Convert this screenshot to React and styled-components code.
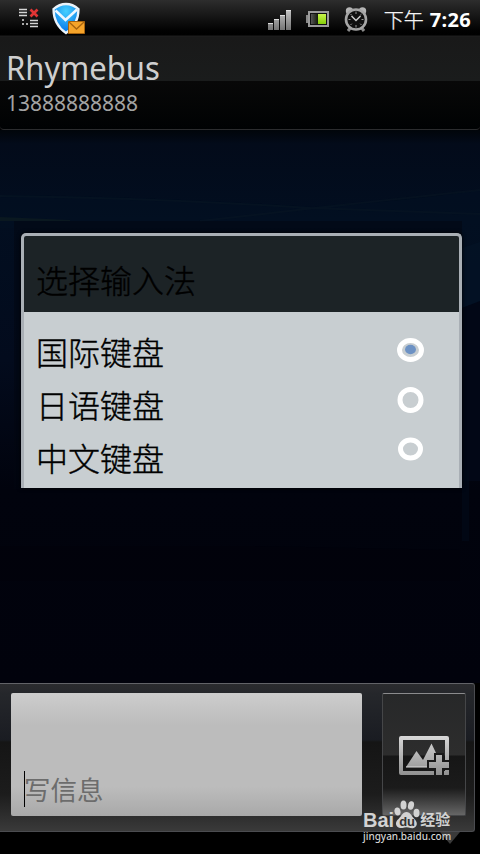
import { useState } from "react";
import styled, { createGlobalStyle } from "styled-components";

const methods = [
  { label: "国际键盘", rx: 11, ry: 9.5, gap: 5 },
  { label: "日语键盘", rx: 10.5, ry: 10.5, gap: 2 },
  { label: "中文键盘", rx: 10, ry: 9, gap: -2 },
];

const App = () => {
  const [selected, setSelected] = useState(0);

  return (
    <Screen>
      <GlobalStyle />

      <StatusBar>
        <SyncIcon />
        <ShieldIcon />
        <Spacer />
        <SignalIcon />
        <BatteryIcon />
        <AlarmIcon />
        <Period>下午</Period>
        <Clock>7:26</Clock>
      </StatusBar>

      <Header>
        <Contact>Rhymebus</Contact>
        <Phone>13888888888</Phone>
      </Header>

      <Conversation>
        <Wallpaper />
        <Dialog>
          <DialogTitle>选择输入法</DialogTitle>
          <Options>
            {methods.map((method, i) => (
              <Option key={method.label} onClick={() => setSelected(i)}>
                <span>{method.label}</span>
                <Radio {...method} checked={selected === i} />
              </Option>
            ))}
          </Options>
        </Dialog>
      </Conversation>

      <Footer>
        <Composer>
          <Message>
            <Caret />
            写信息
          </Message>
          <AttachButton>
            <PictureIcon />
          </AttachButton>
        </Composer>
        <Pointer />
        <Watermark>
          <Brand>
            <span>Bai</span>
            <Paw>
              <PawIcon />
              <PawText>du</PawText>
            </Paw>
            <BrandSuffix>经验</BrandSuffix>
          </Brand>
          <Site>jingyan.baidu.com</Site>
        </Watermark>
      </Footer>
    </Screen>
  );
};

const Radio = ({ rx, ry, gap, checked }) => (
  <RadioSvg $gap={gap} width="28" height="28" viewBox="0 0 28 28">
    <ellipse
      cx="14.5"
      cy="14"
      rx={rx}
      ry={ry}
      fill="none"
      stroke="#fff"
      strokeWidth="5"
    />
    {checked && <ellipse cx="14.5" cy="13.5" rx="5.5" ry="4.7" fill="#6d92c4" />}
  </RadioSvg>
);

const SyncIcon = () => (
  <svg width="22" height="22" viewBox="0 0 22 22">
    <path
      d="M1 2h8M1 5h8M1 8h8M12 13h8M12 16h8M12 19h8"
      transform="translate(0 -.5)"
      stroke="#d5d5d5"
      strokeWidth="1.6"
    />
    <path d="M4 11h2v2H4zM4 15h2v2H4zM8 15h2v2H8z" fill="#aaa" />
    <path d="M12.5 1.5l7 7M19.5 1.5l-7 7" stroke="#e03535" strokeWidth="2.7" />
  </svg>
);

const ShieldIcon = () => (
  <ShieldSvg width="34" height="33" viewBox="0 0 34 33">
    <defs>
      <radialGradient id="shield" cx=".5" cy=".25" r=".7">
        <stop offset="0" stopColor="#45d0ff" />
        <stop offset="1" stopColor="#0878e8" />
      </radialGradient>
    </defs>
    <path
      d="M15 2C10 2 6 4 2.5 7C2.5 16 6 25 15 31C24 25 27.5 16 27.5 7C24 4 20 2 15 2z"
      fill="url(#shield)"
      stroke="#eaf3fa"
      strokeWidth="2.3"
    />
    <path
      d="M4.5 8.5L14.5 18L26 7.5"
      fill="none"
      stroke="#eef7ff"
      strokeWidth="2.6"
    />
    <path
      d="M17.5 19.5h16v12h-16z"
      fill="#f6a42a"
      stroke="#a8640f"
      strokeWidth="1"
    />
    <path d="M18 20l7.5 7l7.5-7" fill="none" stroke="#a8640f" strokeWidth="1.3" />
  </ShieldSvg>
);

const SignalIcon = () => (
  <svg width="24" height="23" viewBox="0 -2 24 23">
    <defs>
      <linearGradient id="bars" x1="0" y1="0" x2="0" y2="20" gradientUnits="userSpaceOnUse">
        <stop offset="0" stopColor="#c4c4c4" />
        <stop offset="1" stopColor="#747474" />
      </linearGradient>
    </defs>
    <path
      d="M0 13h5v7H0zM6 9h5v11H6zM12 5h5v15h-5zM18 0h5v20h-5z"
      fill="url(#bars)"
    />
    <path d="M0 13.5h5M6 9.5h5M12 5.5h5M18 .5h5" stroke="#dedede" />
  </svg>
);

const BatteryIcon = () => (
  <BatterySvg width="23" height="17" viewBox="0 0 23 17">
    <defs>
      <linearGradient id="charge" x1="0" y1="0" x2="0" y2="1">
        <stop offset="0" stopColor="#c8f34b" />
        <stop offset="1" stopColor="#86cf09" />
      </linearGradient>
      <linearGradient id="drained">
        <stop offset="0" stopColor="#555" />
        <stop offset="1" stopColor="#141a0a" />
      </linearGradient>
    </defs>
    <path d="M3 1h19v14H3z" fill="#111" stroke="#9b9b9b" strokeWidth="2" />
    <path d="M0 4h2v8H0z" fill="#888" />
    <path d="M5 3h7v10H5z" fill="url(#drained)" />
    <path d="M12 3h8v10h-8z" fill="url(#charge)" />
  </BatterySvg>
);

const AlarmIcon = () => (
  <AlarmSvg width="24" height="25" viewBox="0 0 24 25">
    <path d="M4 24l3-4M20 24l-3-4" stroke="#8a8a8a" strokeWidth="3" />
    <circle cx="5.5" cy="4" r="3.7" fill="#b5b5b5" />
    <circle cx="18.5" cy="4" r="3.7" fill="#b5b5b5" />
    <circle cx="12" cy="12.5" r="10" fill="#101010" stroke="#a6a6a6" strokeWidth="2.6" />
    <path
      d="M12 4.5v2.5M12 18v2.5M4.5 12.5h2M17.5 12.5h2M6.5 7l1.3 1.3M17.5 7l-1.3 1.3M6.5 18l1.3-1.3M17.5 18l-1.3-1.3"
      stroke="#999"
    />
    <path d="M7.5 9l4.5 4.5l4.5-4.5" fill="none" stroke="#ccc" strokeWidth="1.5" />
  </AlarmSvg>
);

const PictureIcon = () => (
  <svg width="50" height="40" viewBox="0 0 50 40">
    <defs>
      <linearGradient id="metal" x1="0" y1="0" x2="0" y2="40" gradientUnits="userSpaceOnUse">
        <stop offset="0" stopColor="#d8d8d8" />
        <stop offset="1" stopColor="#8f8f8f" />
      </linearGradient>
    </defs>
    <path
      fillRule="evenodd"
      d="M2 0h46q2 0 2 2v36q0 1-2 1H2q-2 0-2-2V2q0-2 2-2zM4 4v31h42V4z"
      fill="url(#metal)"
    />
    <path d="M7 31L17.5 15L24 24L32.5 7.5L37 17v14z" fill="url(#metal)" />
    <path d="M7 31h23" stroke="#ddd" />
    <path d="M35 17h10v7h5v10h-5v6H35v-6h-7V24h7z" fill="#1a1a1a" />
    <path d="M37 19h6v7h7v6h-7v7h-6v-7h-7v-6h7z" fill="url(#metal)" />
    <path d="M46 34h4v4q0 1-1 1h-3z" fill="url(#metal)" />
  </svg>
);

const PawIcon = () => (
  <svg width="26" height="29" viewBox="0 0 26 29">
    <g fill="#d2d2d2">
      <ellipse cx="3.5" cy="11.5" rx="3" ry="4" transform="rotate(-12 3.5 11.5)" />
      <ellipse cx="9.5" cy="5" rx="3" ry="4.5" />
      <ellipse cx="17" cy="5.5" rx="3" ry="4.3" transform="rotate(12 17 5.5)" />
      <ellipse cx="22.5" cy="13" rx="3" ry="4.2" />
      <path d="M12.500 12c4 0 5 4 8 7c5 5 1 10-4 9c-3-1-5-1-8 0c-6 1-9-5-4-9c3-3 4-7 8-7z" />
    </g>
  </svg>
);

// faint light streaks behind the dialog
const Wallpaper = () => (
  <WallpaperSvg width="480" height="553" viewBox="0 0 480 553" preserveAspectRatio="none">
    <path d="M0 65Q130 66 315 77Q400 72 480 60V170L462 178V98H0z" fill="#031224" opacity=".4" />
    <path d="M0 66Q160 68 310 78L480 84M200 91L315 78L480 60" fill="none" stroke="#0b1b25" strokeWidth="2" opacity=".35" />
    <path d="M0 87l70 3v1H0z" fill="#0a1820" />
    <path d="M14 91h448v268H14z" fill="#02050f" opacity=".5" />
    <path d="M462 118l18-6v60l-18 6z" fill="#041326" opacity=".8" />
    <path d="M462 178l18-7v180h-18z" fill="#020716" />
    <path d="M462 340h7v71h-7z" fill="#020a18" opacity=".7" />
    <path d="M0 416h250l210 4v31H0z" fill="#01020a" opacity=".65" />
  </WallpaperSvg>
);

const GlobalStyle = createGlobalStyle`
  * {
    box-sizing: border-box;
  }

  body {
    background-color: #000;
    margin: 0;
  }
`;

const Screen = styled.div`
  background-color: #000;
  display: flex;
  flex-direction: column;
  font-family: "Noto Sans", "Noto Sans CJK SC", sans-serif;
  height: 854px;
  overflow: hidden;
  width: 480px;

  svg {
    display: block;
    flex: none;
  }
`;

const StatusBar = styled.div`
  align-items: flex-start;
  background: linear-gradient(#2d2d2d 0, #191919 14px, #010101 31px, #000 35px, #1c1c1c 36px);
  display: flex;
  height: 37px;
  padding: 8px 9px 0 18px;
`;

const ShieldSvg = styled.svg`
  margin: -6px 0 0 11px;
`;

const Spacer = styled.div`
  flex: 1;
`;

const BatterySvg = styled.svg`
  margin: 3px 0 0 14px;
`;

const AlarmSvg = styled.svg`
  margin: -1px 0 0 15px;
`;

const Period = styled.span`
  color: #f5f5f5;
  font-family: "Noto Sans CJK SC", sans-serif;
  font-size: 20px;
  font-weight: 300;
  -webkit-text-stroke: 0.3px #f5f5f5;
  line-height: 24px;
  margin-left: 16px;
`;

const Clock = styled.span`
  color: #fff;
  font-size: 20px;
  font-weight: 700;
  letter-spacing: 0.3px;
  line-height: 24px;
  margin-left: 6px;
`;

const Header = styled.div`
  background: linear-gradient(#191919 0, #1a1c1c 44px, #080808 44px, #000203 100%);
  border-bottom: 1px solid #2b2c2e;
  border-radius: 0 0 4px 4px;
  display: flex;
  flex-direction: column;
  height: 93px;
  padding: 10px 6px 0;
`;

/* slightly condensed name */
const Contact = styled.div`
  color: #cfcfcf;
  font-size: 33px;
  line-height: 41px;
  transform: scaleX(0.94);
  transform-origin: left;
`;

const Phone = styled.div`
  color: #a3a3a3;
  font-size: 21px;
  line-height: 30px;
`;

const Conversation = styled.div`
  background: linear-gradient(#01050a 0, #030b1a 14px, #020e20 90px, #030b1d 230px, #01030d 360px, #01020c 100%);
  height: 553px;
  padding: 103px 18px 0 21px;
  position: relative;
`;

const WallpaperSvg = styled.svg`
  inset: 0;
  position: absolute;
`;

const Dialog = styled.div`
  background-color: #c8ced1;
  border: 3px solid #a9afb5;
  border-bottom: 0;
  border-radius: 5px 5px 0 0;
  box-shadow: 0 0 4px #000;
  font-family: "Noto Sans CJK SC", sans-serif;
  height: 255px;
  position: relative;
`;

const DialogTitle = styled.div`
  background-color: #1c2326;
  border-radius: 2px 2px 0 0;
  color: #000;
  font-size: 32px;
  font-weight: 300;
  -webkit-text-stroke: 0.4px #000;
  height: 76px;
  line-height: 48px;
  padding: 19px 12px 0;
`;

const Options = styled.div`
  display: flex;
  flex-direction: column;
  padding: 13px 35px 0 12px;
`;

const Option = styled.div`
  align-items: flex-start;
  color: #000;
  cursor: pointer;
  display: flex;
  font-size: 32px;
  font-weight: 300;
  -webkit-text-stroke: 0.4px #000;
  height: 53px;
  justify-content: space-between;
  line-height: 53px;
`;

const RadioSvg = styled.svg`
  margin-top: ${({ $gap }) => $gap + 6}px;
`;

const Footer = styled.div`
  height: 171px;
  position: relative;
`;

const Composer = styled.div`
  background: linear-gradient(#2b2c2f 0, #25272b 10px, #1a1c22 56px, #151515 58px, #1c1c1c 110px, #3a3a3a 100%);
  border: 1px solid #4b4c50;
  border-left: 0;
  border-top-color: #626368;
  border-radius: 0 3px 3px 0;
  display: flex;
  height: 149px;
  justify-content: space-between;
  padding: 9px 8px 0 11px;
  width: 475px;
`;

const Message = styled.div`
  align-items: flex-end;
  background: linear-gradient(#cdcdcd, #bcbcbc 26%, #bcbcbc 76%, #a9a9a9);
  border-radius: 2px;
  color: #6c6c6c;
  display: flex;
  font-family: "Noto Sans CJK SC", sans-serif;
  font-size: 26.5px;
  height: 123px;
  line-height: 36px;
  padding: 0 0 9px 13px;
  width: 351px;
`;

const Caret = styled.span`
  background-color: #000;
  height: 36px;
  margin-right: -1px;
  width: 1px;
`;

const AttachButton = styled.div`
  background: linear-gradient(#272829 0, #2d2d2d 61px, #161616 62px, #1b1b1b 94px, #666 100%);
  border: 1px solid #454648;
  border-radius: 2px;
  border-top-color: #8b8b8d;
  display: flex;
  height: 123px;
  justify-content: center;
  padding-top: 42px;
  width: 84px;
`;

const Pointer = styled.div`
  border: 10px solid transparent;
  border-bottom: 0;
  border-top: 12px solid #3a3a3a;
  height: 0;
  margin-left: 440px;
  width: 0;
`;

const Watermark = styled.div`
  color: #d2d2d2;
  left: 363px;
  position: absolute;
  top: 117px;
`;

const Brand = styled.div`
  align-items: flex-end;
  display: flex;
  font-family: "Liberation Sans", sans-serif;
  font-size: 20px;
  font-weight: 700;
  height: 29px;
  line-height: 17px;
`;

const Paw = styled.div`
  height: 29px;
  position: relative;
`;

const PawText = styled.span`
  bottom: -1px;
  color: #333;
  font-size: 13px;
  left: 5px;
  line-height: 17px;
  position: absolute;
`;

const BrandSuffix = styled.span`
  font-family: "Noto Sans CJK SC", sans-serif;
  font-size: 15px;
  line-height: 20px;
`;

const Site = styled.div`
  font-family: "Noto Sans", sans-serif;
  font-size: 10px;
  font-weight: 500;
  line-height: 14px;
  white-space: nowrap;
`;

export default App;
